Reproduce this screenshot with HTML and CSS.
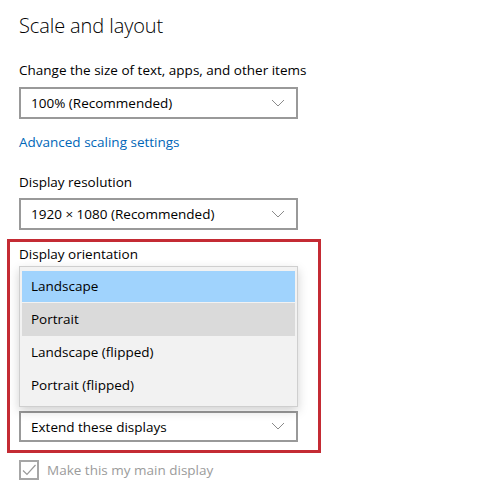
FILE: index.html
```html
<!DOCTYPE html>
<html>
<head>
<meta charset="utf-8">
<link rel="stylesheet" href="styles.css">
</head>
<body>
<div class="page">
  <h1 class="title">Scale and layout</h1>
  <div class="label first">Change the size of text, apps, and other items</div>
  <div class="select">
    <span>100% (Recommended)</span>
    <svg class="chev" width="14" height="8" viewBox="0 0 14 8"><path d="M1 1 L7 7 L13 1" fill="none" stroke="#8a8a8a" stroke-width="1"/></svg>
  </div>
  <a class="link">Advanced scaling settings</a>
  <div class="label">Display resolution</div>
  <div class="select second">
    <span>1920 × 1080 (Recommended)</span>
    <svg class="chev" width="14" height="8" viewBox="0 0 14 8"><path d="M1 1 L7 7 L13 1" fill="none" stroke="#8a8a8a" stroke-width="1"/></svg>
  </div>
  <div class="highlight">
    <div class="label inbox">Display orientation</div>
    <div class="select extend">
      <span>Extend these displays</span>
      <svg class="chev" width="14" height="8" viewBox="0 0 14 8"><path d="M1 1 L7 7 L13 1" fill="none" stroke="#8a8a8a" stroke-width="1"/></svg>
    </div>
    <ul class="menu">
      <li class="item selected">Landscape</li>
      <li class="item hover">Portrait</li>
      <li class="item">Landscape (flipped)</li>
      <li class="item">Portrait (flipped)</li>
    </ul>
  </div>
  <div class="check">
    <span class="box">
      <svg width="16" height="16" viewBox="0 0 16 16"><path d="M2 8.5 L6 12.5 L14.5 3" fill="none" stroke="#9a9a9a" stroke-width="1.2"/></svg>
    </span>
    <span class="check-text">Make this my main display</span>
  </div>
</div>
</body>
</html>
```
FILE: styles.css
```css
html, body {
  margin: 0;
  padding: 0;
  background: #ffffff;
}
body {
  font-family: "Open Sans", "Noto Sans", sans-serif;
  font-size: 13.5px;
  color: #000;
}
.page {
  padding: 0 0 0 19px;
  width: 420px;
}
.title {
  margin: 0;
  padding-top: 12px;
  font-size: 20px;
  font-weight: 300;
  line-height: 28px;
  color: #000;
  letter-spacing: -0.1px;
}
.label {
  line-height: 20px;
  height: 20px;
}
.label.first {
  margin-top: 20px;
}
.select {
  box-sizing: border-box;
  width: 279px;
  height: 32px;
  border: 2px solid #999;
  margin-top: 7px;
  display: flex;
  align-items: center;
  justify-content: space-between;
  padding: 0 11px 0 10px;
  background: #fff;
}
.select.second {
  margin-top: 6px;
}
.select span {
  line-height: 20px;
}
.chev {
  display: block;
  margin-top: -1px;
}
.link {
  display: block;
  color: #0067b8;
  line-height: 20px;
  margin-top: 13px;
  margin-bottom: 20px;
}
.highlight {
  position: relative;
  box-sizing: border-box;
  margin-left: -12px;
  width: 314px;
  margin-top: 9px;
  border: 3px solid #c42b34;
  padding: 2px 0 8px 9px;
}
.select.extend {
  margin-top: 147px;
  height: 31px;
}
.menu {
  position: absolute;
  left: 9px;
  top: 24px;
  box-sizing: border-box;
  width: 279px;
  height: 141px;
  margin: 0;
  padding: 4px 2px;
  list-style: none;
  background: #f2f2f2;
  border: 1px solid #cfcfcf;
  box-shadow: 0 4px 10px rgba(0, 0, 0, 0.18);
}
.item {
  height: 33px;
  line-height: 32px;
  padding-left: 9px;
}
.item.selected {
  background: #a0d3fd;
  height: 31px;
  line-height: 31px;
  margin-bottom: 1px;
}
.item.hover {
  background: #dadada;
}
.check {
  display: flex;
  align-items: center;
  margin-top: 7px;
  gap: 8px;
}
.box {
  box-sizing: border-box;
  width: 20px;
  height: 20px;
  border: 2px solid #a6a6a6;
  display: flex;
  align-items: center;
  justify-content: center;
}
.box svg {
  display: block;
}
.check-text {
  color: #9b9b9b;
  line-height: 20px;
}
```
